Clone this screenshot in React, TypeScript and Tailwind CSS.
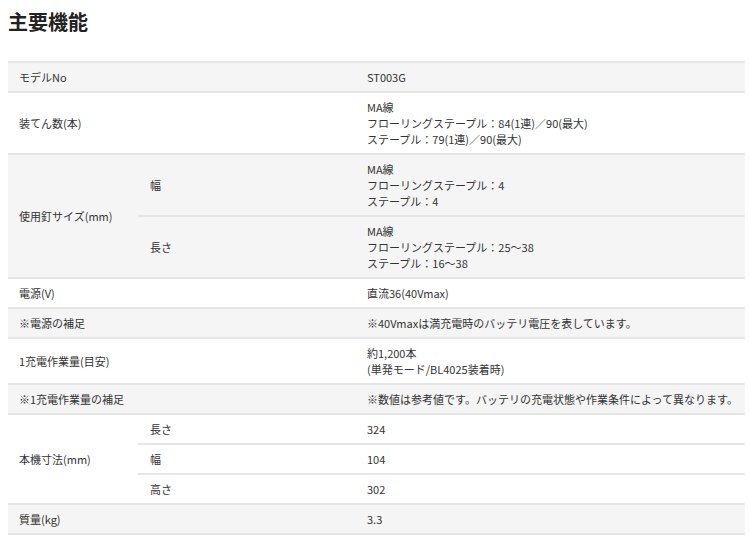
import React from 'react';

type Sub = { label: string; value: string[] };
type Row = { label: string; value?: string[]; subs?: Sub[]; gray: boolean };

const rows: Row[] = [
  { label: 'モデルNo', value: ['ST003G'], gray: true },
  { label: '装てん数(本)', value: ['MA線', 'フローリングステープル：84(1連)／90(最大)', 'ステープル：79(1連)／90(最大)'], gray: false },
  {
    label: '使用釘サイズ(mm)',
    gray: true,
    subs: [
      { label: '幅', value: ['MA線', 'フローリングステープル：4', 'ステープル：4'] },
      { label: '長さ', value: ['MA線', 'フローリングステープル：25〜38', 'ステープル：16〜38'] },
    ],
  },
  { label: '電源(V)', value: ['直流36(40Vmax)'], gray: false },
  { label: '※電源の補足', value: ['※40Vmaxは満充電時のバッテリ電圧を表しています。'], gray: true },
  { label: '1充電作業量(目安)', value: ['約1,200本', '(単発モード/BL4025装着時)'], gray: false },
  { label: '※1充電作業量の補足', value: ['※数値は参考値です。バッテリの充電状態や作業条件によって異なります。'], gray: true },
  {
    label: '本機寸法(mm)',
    gray: false,
    subs: [
      { label: '長さ', value: ['324'] },
      { label: '幅', value: ['104'] },
      { label: '高さ', value: ['302'] },
    ],
  },
  { label: '質量(kg)', value: ['3.3'], gray: true },
];

const cell = 'border-b-2 border-[#e6e6e6] align-middle py-[6px]';

export default function App() {
  return (
    <div className="bg-white min-h-[539px] px-2 text-[#333]" style={{ fontFamily: '"Noto Sans CJK JP", "Noto Sans", sans-serif' }}>
      <h2 className="pt-[8px] h-[61px] text-[20px] font-bold leading-[28px] text-[#222]">主要機能</h2>
      <table className="w-[737px] border-collapse border-t-2 border-[#e6e6e6] text-[11px] leading-[16px]">
        <colgroup>
          <col className="w-[130px]" />
          <col className="w-[217px]" />
          <col />
        </colgroup>
        <tbody>
          {rows.map((r, i) =>
            r.subs ? (
              r.subs.map((s, j) => (
                <tr key={`${i}-${j}`} className={r.gray ? 'bg-[#f5f5f5]' : 'bg-white'}>
                  {j === 0 && (
                    <td rowSpan={r.subs!.length} className={`${cell} pl-[11px]`}>
                      {r.label}
                    </td>
                  )}
                  <td className={`${cell} pl-[12px]`}>{s.label}</td>
                  <td className={`${cell} pl-[12px]`}>
                    {s.value.map((v, k) => (
                      <div key={k} className="h-[16px]">{v}</div>
                    ))}
                  </td>
                </tr>
              ))
            ) : (
              <tr key={i} className={r.gray ? 'bg-[#f5f5f5]' : 'bg-white'}>
                <td colSpan={2} className={`${cell} pl-[11px]`}>
                  {r.label}
                </td>
                <td className={`${cell} pl-[12px]`}>
                  {r.value!.map((v, k) => (
                    <div key={k} className="h-[16px]">{v}</div>
                  ))}
                </td>
              </tr>
            )
          )}
        </tbody>
      </table>
    </div>
  );
}
